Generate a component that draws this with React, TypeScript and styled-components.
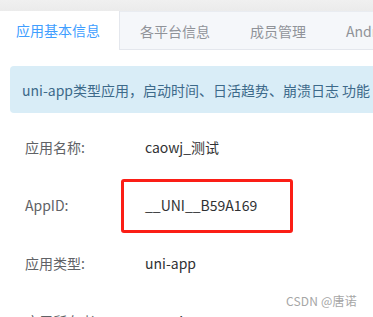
import styled, { createGlobalStyle } from "styled-components";

const GlobalStyle = createGlobalStyle`
  html, body {
    margin: 0;
    padding: 0;
    background: #fff;
  }
  body {
    font-family: "Microsoft YaHei", "Noto Sans CJK SC", "Noto Sans", sans-serif;
  }
`;

const Page = styled.div`
  position: relative;
  width: 373px;
  height: 317px;
  overflow: hidden;
  background: #fff;
`;

const TopBand = styled.div`
  height: 11px;
  background: linear-gradient(#f0f0f0, #ebebeb);
`;

const TabBar = styled.div`
  display: flex;
  height: 39px;
  white-space: nowrap;
`;

const Tab = styled.div<{ $active?: boolean; $first?: boolean }>`
  box-sizing: border-box;
  flex-shrink: 0;
  height: 39px;
  line-height: 39px;
  font-size: 14px;
  padding: ${({ $first }) => ($first ? "0 19px 0 16px" : "0 20px")};
  color: ${({ $active }) => ($active ? "#409eff" : "#909399")};
  background: ${({ $active }) => ($active ? "#fff" : "#f5f7fa")};
  border-top: ${({ $active }) => ($active ? "none" : "1px solid #e9ecf1")};
  border-bottom: ${({ $active }) => ($active ? "none" : "1px solid #e4e7ed")};
`;

const InactiveGroup = styled.div`
  display: flex;
  border-left: 1px solid #e4e7ed;
  flex-shrink: 0;
`;

const Alert = styled.div`
  margin: 16px 0 0 10px;
  width: 420px;
  height: 47px;
  box-sizing: border-box;
  padding-left: 12px;
  display: flex;
  align-items: center;
  border-radius: 4px;
  background: #d9edf7;
  color: #3d6a8a;
  font-size: 14px;
  white-space: nowrap;
`;

const InfoList = styled.div`
  margin-top: 5px;
  display: flex;
  flex-direction: column;
`;

const Row = styled.div`
  position: relative;
  display: flex;
  align-items: center;
  height: 58px;
  font-size: 14px;
  white-space: nowrap;
`;

const Label = styled.span`
  width: 120px;
  padding-left: 25px;
  flex-shrink: 0;
  color: #606266;
`;

const Value = styled.span`
  color: #303133;
`;

// red annotation drawn over the AppID row
const Highlight = styled.div`
  position: absolute;
  left: 121px;
  top: 3px;
  width: 172px;
  height: 54px;
  box-sizing: border-box;
  border: 3px solid #fb1e16;
  border-radius: 3px;
`;

const Watermark = styled.div`
  position: absolute;
  right: 16px;
  top: 293px;
  font-size: 12px;
  line-height: 16px;
  color: #a6a6a6;
  letter-spacing: 0.2px;
`;

const rows = [
  { label: "应用名称:", value: "caowj_测试" },
  { label: "AppID:", value: "__UNI__B59A169", marked: true },
  { label: "应用类型:", value: "uni-app" },
  { label: "应用所有者:", value: "caowj1104@163.com" },
];

export default function App() {
  return (
    <Page>
      <GlobalStyle />
      <TopBand />
      <TabBar>
        <Tab $active $first>应用基本信息</Tab>
        <InactiveGroup>
          <Tab>各平台信息</Tab>
          <Tab>成员管理</Tab>
          <Tab>Android云端证书</Tab>
        </InactiveGroup>
      </TabBar>
      <Alert>uni-app类型应用，启动时间、日活趋势、崩溃日志 功能</Alert>
      <InfoList>
        {rows.map((r) => (
          <Row key={r.label}>
            <Label>{r.label}</Label>
            <Value>{r.value}</Value>
            {r.marked && <Highlight />}
          </Row>
        ))}
      </InfoList>
      <Watermark>CSDN @唐诺</Watermark>
    </Page>
  );
}
